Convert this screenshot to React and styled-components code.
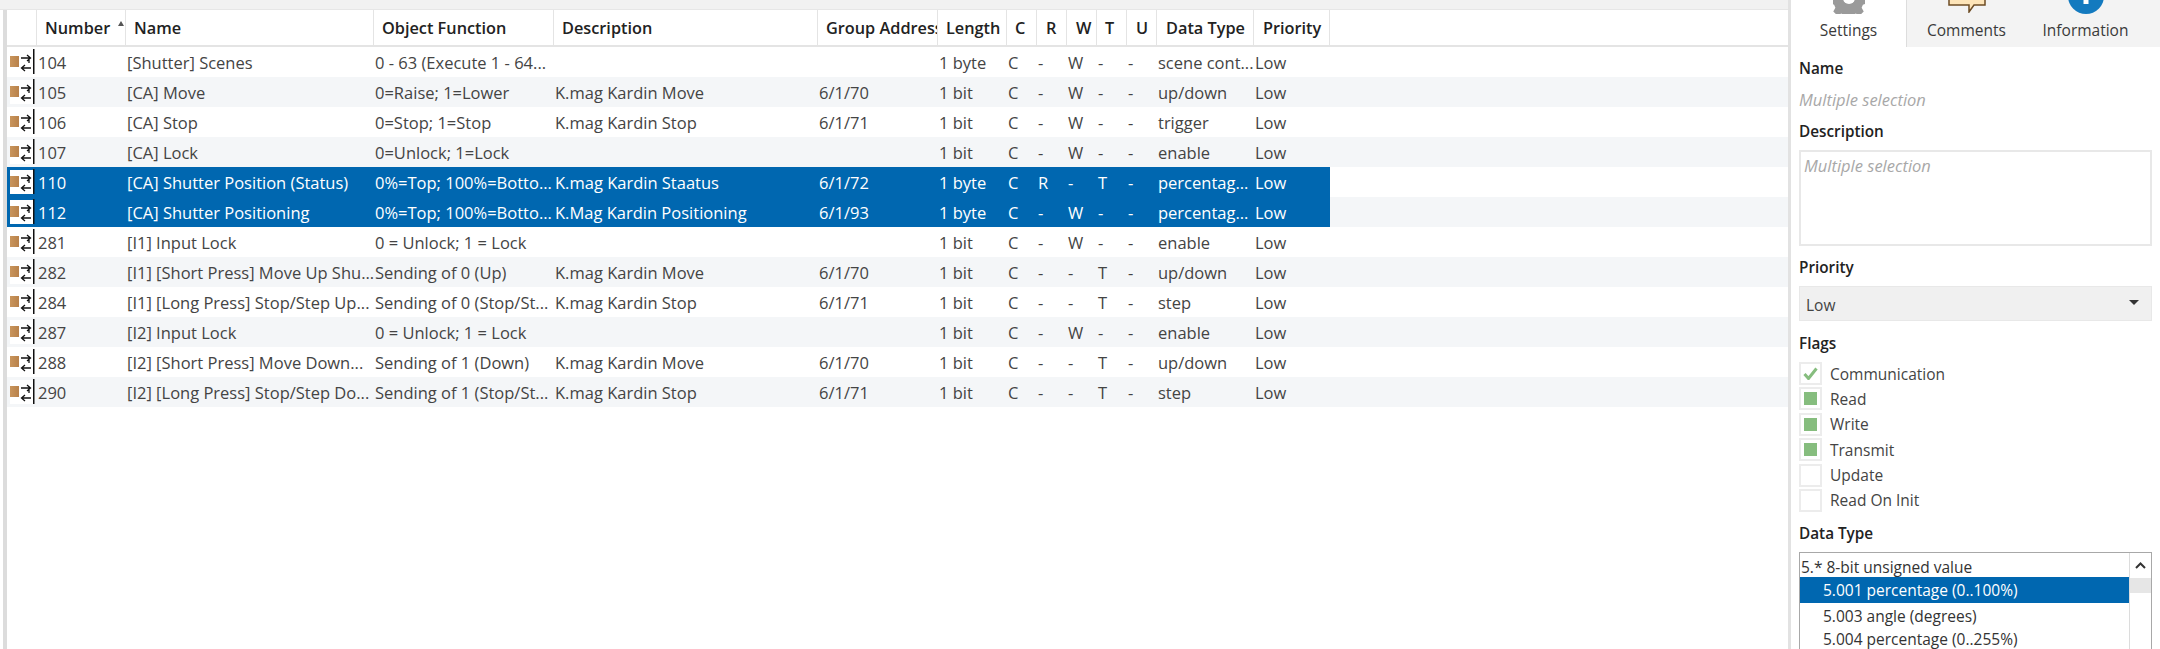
import React from 'react'
import styled, { createGlobalStyle } from 'styled-components'

const GlobalStyle = createGlobalStyle`
  html, body { margin: 0; padding: 0; background: #fff; overflow: hidden; }
  body { font-family: "Open Sans", "Noto Sans", "Liberation Sans", sans-serif; }
  #root { height: 649px; }
`

const columns = '30px 89px 248px 180px 264px 120px 69px 30px 30px 30px 30px 30px 97px 76px'
const tableWidth = '1323px'

const headers = [
  { label: '', pad: 0 },
  { label: 'Number', pad: 8, sorted: true },
  { label: 'Name', pad: 8 },
  { label: 'Object Function', pad: 8 },
  { label: 'Description', pad: 8 },
  { label: 'Group Address', pad: 8 },
  { label: 'Length', pad: 8 },
  { label: 'C', pad: 8 },
  { label: 'R', pad: 9 },
  { label: 'W', pad: 9 },
  { label: 'T', pad: 8 },
  { label: 'U', pad: 9 },
  { label: 'Data Type', pad: 9 },
  { label: 'Priority', pad: 9 },
]

const rows = [
  ['104', '[Shutter] Scenes', '0 - 63 (Execute 1 - 64...', '', '', '1 byte', 'C', '-', 'W', '-', '-', 'scene cont...', 'Low'],
  ['105', '[CA] Move', '0=Raise; 1=Lower', 'K.mag Kardin Move', '6/1/70', '1 bit', 'C', '-', 'W', '-', '-', 'up/down', 'Low'],
  ['106', '[CA] Stop', '0=Stop; 1=Stop', 'K.mag Kardin Stop', '6/1/71', '1 bit', 'C', '-', 'W', '-', '-', 'trigger', 'Low'],
  ['107', '[CA] Lock', '0=Unlock; 1=Lock', '', '', '1 bit', 'C', '-', 'W', '-', '-', 'enable', 'Low'],
  ['110', '[CA] Shutter Position (Status)', '0%=Top; 100%=Botto...', 'K.mag Kardin Staatus', '6/1/72', '1 byte', 'C', 'R', '-', 'T', '-', 'percentag...', 'Low'],
  ['112', '[CA] Shutter Positioning', '0%=Top; 100%=Botto...', 'K.Mag Kardin Positioning', '6/1/93', '1 byte', 'C', '-', 'W', '-', '-', 'percentag...', 'Low'],
  ['281', '[I1] Input Lock', '0 = Unlock; 1 = Lock', '', '', '1 bit', 'C', '-', 'W', '-', '-', 'enable', 'Low'],
  ['282', '[I1] [Short Press] Move Up Shu...', 'Sending of 0 (Up)', 'K.mag Kardin Move', '6/1/70', '1 bit', 'C', '-', '-', 'T', '-', 'up/down', 'Low'],
  ['284', '[I1] [Long Press] Stop/Step Up...', 'Sending of 0 (Stop/St...', 'K.mag Kardin Stop', '6/1/71', '1 bit', 'C', '-', '-', 'T', '-', 'step', 'Low'],
  ['287', '[I2] Input Lock', '0 = Unlock; 1 = Lock', '', '', '1 bit', 'C', '-', 'W', '-', '-', 'enable', 'Low'],
  ['288', '[I2] [Short Press] Move Down...', 'Sending of 1 (Down)', 'K.mag Kardin Move', '6/1/70', '1 bit', 'C', '-', '-', 'T', '-', 'up/down', 'Low'],
  ['290', '[I2] [Long Press] Stop/Step Do...', 'Sending of 1 (Stop/St...', 'K.mag Kardin Stop', '6/1/71', '1 bit', 'C', '-', '-', 'T', '-', 'step', 'Low'],
]

const selectedRows = ['110', '112']

const flags = [
  { label: 'Communication', mark: 'check' },
  { label: 'Read', mark: 'square' },
  { label: 'Write', mark: 'square' },
  { label: 'Transmit', mark: 'square' },
  { label: 'Update' },
  { label: 'Read On Init' },
]

const Page = styled.div`
  display: flex;
  width: 2160px;
  height: 649px;
  overflow: hidden;
  font-size: 15.5px;
  color: #444;
`

const Main = styled.div`
  flex: 0 0 1788px;
  display: flex;
  flex-direction: column;
  border-right: 3px solid #e2e2e2;
`

const TopStrip = styled.div`
  flex: 0 0 10px;
  background: #f1f1f1;
  border-bottom: 1px solid #e6e6e6;
  box-sizing: border-box;
`

const Content = styled.div`
  flex: 1;
  margin-left: 3px;
  border-left: 4px solid #dcdcdc;
`

const HeaderRow = styled.div`
  display: grid;
  grid-template-columns: ${columns};
  height: 37px;
  box-sizing: border-box;
  border-bottom: 2px solid #e4e4e4;
`

const HeaderCell = styled.div`
  position: relative;
  padding-left: ${p => p.$pad}px;
  padding-top: 2px;
  border-right: 1px solid #e4e4e4;
  overflow: hidden;
  white-space: nowrap;
  font-weight: 600;
  font-size: 16.3px;
  line-height: 32px;
  color: #222;
`

const SortMark = styled.span`
  position: absolute;
  right: 1px;
  top: 11px;
  width: 0;
  height: 0;
  border-left: 3px solid transparent;
  border-right: 3px solid transparent;
  border-bottom: 5px solid #555;
`

const RowLine = styled.div`
  height: 30px;
  background: ${p => (p.$alt ? '#f4f6f8' : '#fff')};
`

const RowCells = styled.div`
  display: grid;
  grid-template-columns: ${columns};
  width: ${tableWidth};
  height: 30px;
  line-height: 31px;
  font-size: 16.5px;
  background: ${p => (p.$selected ? '#0067b0' : 'transparent')};
  color: ${p => (p.$selected ? '#fff' : '#444')};
`

const Cell = styled.div`
  padding-left: 1px;
  white-space: nowrap;
  overflow: hidden;
`

const IconCell = styled.div`
  display: flex;
  padding-left: 3px;
`

const ObjectIcon = styled.svg`
  flex: none;
  display: block;
`

const Side = styled.aside`
  flex: 1;
  min-width: 0;
  display: flex;
  flex-direction: column;
`

const TabStrip = styled.div`
  flex: 0 0 47px;
  display: flex;
  background: #f3f3f3;
`

const Tab = styled.div`
  flex: 0 0 ${p => p.$width}px;
  height: 47px;
  overflow: hidden;
  display: flex;
  flex-direction: column;
  align-items: center;
  justify-content: flex-end;
  box-sizing: border-box;
  padding-bottom: 7px;
  background: ${p => (p.$active ? '#fff' : 'transparent')};
  border-right: ${p => (p.$active ? '1px solid #ddd' : 'none')};
  line-height: 20px;
  color: #3a3a3a;
`

const TabIcon = styled.svg`
  flex: none;
  display: block;
  margin-bottom: ${p => p.$gap || 6}px;
`

const Form = styled.div`
  flex: 1;
  padding: 10px 8px 0;
  overflow: hidden;
`

const Label = styled.div`
  font-weight: 600;
  font-size: 15.3px;
  line-height: 22px;
  color: #222;
  margin-top: ${p => p.$top || 0}px;
`

const Placeholder = styled.div`
  font-style: italic;
  font-size: 16.5px;
  line-height: 22px;
  color: #a8a8a8;
`

const NameValue = styled(Placeholder)`
  margin-top: 10px;
`

const DescriptionBox = styled.div`
  height: 96px;
  margin-top: 8px;
  padding: 3px 3px;
  box-sizing: border-box;
  border: 2px solid #e8e8e8;
`

const Select = styled.div`
  display: flex;
  align-items: center;
  justify-content: space-between;
  height: 35px;
  margin-top: 8px;
  padding: 2px 12px 0 6px;
  box-sizing: border-box;
  background: #f0f0f0;
  border: 1px solid #e8e8e8;
`

const Caret = styled.span`
  width: 0;
  height: 0;
  margin-top: -5px;
  border-left: 5px solid transparent;
  border-right: 5px solid transparent;
  border-top: 5px solid #333;
`

const FlagList = styled.div`
  display: flex;
  flex-direction: column;
  gap: 2.4px;
  margin-top: 8px;
`

const FlagRow = styled.div`
  display: flex;
  align-items: center;
  gap: 8px;
  height: 23px;
`

const FlagBox = styled.span`
  flex: none;
  width: 23px;
  height: 23px;
  box-sizing: border-box;
  border: 2px solid #ececec;
  display: flex;
  align-items: center;
  justify-content: center;
`

const FlagSquare = styled.span`
  width: 13px;
  height: 13px;
  background: #86bd7e;
`

const ListBox = styled.div`
  display: flex;
  height: 120px;
  margin-top: 8px;
  box-sizing: border-box;
  border: 1px solid #a8a8a8;
  border-bottom: none;
`

const ListItems = styled.div`
  flex: 1;
  min-width: 0;
`

const GroupItem = styled.div`
  height: 24px;
  line-height: 28px;
  padding-left: 1px;
  color: #333;
`

const ListItem = styled.div`
  height: ${p => (p.$selected ? '26px' : '23.5px')};
  line-height: 26px;
  padding-left: 23px;
  background: ${p => (p.$selected ? '#0067b0' : 'transparent')};
  color: ${p => (p.$selected ? '#fff' : '#333')};
`

const ScrollBar = styled.div`
  flex: 0 0 21px;
  display: flex;
  flex-direction: column;
  align-items: center;
  border-left: 1px solid #dcdcdc;
`

const ScrollArrow = styled.svg`
  display: block;
  margin: 9px 0 9px;
`

const ScrollThumb = styled.div`
  width: 100%;
  height: 15px;
  background: #e6e6e6;
`

const ConnectorIcon = () => (
  <ObjectIcon width="27" height="30" viewBox="0 0 27 30">
    <defs>
      <linearGradient id="brown" x1="0" x2="1" y1="0" y2="0">
        <stop offset="0" stopColor="#c9955c" />
        <stop offset="1" stopColor="#b8814a" />
      </linearGradient>
    </defs>
    <rect x="0" y="3" width="23" height="24" fill="#fff" />
    <rect x="0" y="9" width="9" height="11" fill="url(#brown)" />
    <path d="M11 11h9M17 8l3.500 3-3.500 3M19 11v5" fill="none" stroke="#111" strokeWidth="1.300" />
    <path d="M21 21h-9M15 18l-3.500 3 3.500 3" fill="none" stroke="#111" strokeWidth="1.300" />
    <rect x="23" y="2" width="1.500" height="25" fill="#111" />
  </ObjectIcon>
)

const GearIcon = () => (
  <TabIcon width="32" height="32" viewBox="0 0 32 32">
    <path
      d="M13 1h6l1 4 3 1.300 3.500-2 4 4.200-2 3.500 1.200 3 4 1v6l-4 1-1.200 3 2 3.500-4 4-3.500-2-3 1.200-1 4h-6l-1-4-3-1.200-3.500 2-4-4 2-3.500-1.200-3-4-1v-6l4-1 1.200-3-2-3.500 4-4.200 3.500 2 3-1.300z"
      transform="translate(-1.500 -1.500) scale(1.050) translate(0.200 0)"
      fill="#9a9a9a"
    />
    <circle cx="16" cy="16" r="6" fill="#fff" />
  </TabIcon>
)

const CommentIcon = () => (
  <TabIcon width="38" height="24" viewBox="0 0 38 24" $gap={7}>
    <path d="M1 -4h36v20H26l-5 7v-7H1z" fill="#fde4b8" stroke="#6d4c24" strokeWidth="1.500" />
  </TabIcon>
)

const InfoIcon = () => (
  <TabIcon width="36" height="36" viewBox="0 0 36 36">
    <circle cx="18" cy="18" r="18" fill="#137abf" />
    <rect x="15.500" y="13" width="5" height="13" fill="#fff" />
  </TabIcon>
)

const App = () => {
  return (
    <>
      <GlobalStyle />
      <Page>
        <Main>
          <TopStrip />
          <Content>
            <HeaderRow>
              {headers.map(({ label, pad, sorted }, i) => (
                <HeaderCell key={i} $pad={pad}>
                  {label}
                  {sorted && <SortMark />}
                </HeaderCell>
              ))}
            </HeaderRow>
            {rows.map((row, i) => (
              <RowLine key={row[0]} $alt={i % 2 === 1}>
                <RowCells $selected={selectedRows.includes(row[0])}>
                  <IconCell>
                    <ConnectorIcon />
                  </IconCell>
                  {row.map((value, j) => (
                    <Cell key={j}>{value}</Cell>
                  ))}
                </RowCells>
              </RowLine>
            ))}
          </Content>
        </Main>
        <Side>
          <TabStrip>
            <Tab $width={116} $active>
              <GearIcon />
              Settings
            </Tab>
            <Tab $width={119}>
              <CommentIcon />
              Comments
            </Tab>
            <Tab $width={119}>
              <InfoIcon />
              Information
            </Tab>
          </TabStrip>
          <Form>
            <Label>Name</Label>
            <NameValue>Multiple selection</NameValue>
            <Label $top={9}>Description</Label>
            <DescriptionBox>
              <Placeholder>Multiple selection</Placeholder>
            </DescriptionBox>
            <Label $top={10}>Priority</Label>
            <Select>
              Low
              <Caret />
            </Select>
            <Label $top={11}>Flags</Label>
            <FlagList>
              {flags.map(({ label, mark }) => (
                <FlagRow key={label}>
                  <FlagBox>
                    {mark === 'check' && (
                      <svg width="15" height="13" viewBox="0 0 15 13">
                        <path d="M1.500 7l4 4.500L13.500 1.500" fill="none" stroke="#86bd7e" strokeWidth="3" />
                      </svg>
                    )}
                    {mark === 'square' && <FlagSquare />}
                  </FlagBox>
                  {label}
                </FlagRow>
              ))}
            </FlagList>
            <Label $top={10}>Data Type</Label>
            <ListBox>
              <ListItems>
                <GroupItem>5.* 8-bit unsigned value</GroupItem>
                <ListItem $selected>5.001 percentage (0..100%)</ListItem>
                <ListItem>5.003 angle (degrees)</ListItem>
                <ListItem>5.004 percentage (0..255%)</ListItem>
              </ListItems>
              <ScrollBar>
                <ScrollArrow width="11" height="7" viewBox="0 0 11 7">
                  <path d="M1 6l4.500-4.500L10 6" fill="none" stroke="#333" strokeWidth="2" />
                </ScrollArrow>
                <ScrollThumb />
              </ScrollBar>
            </ListBox>
          </Form>
        </Side>
      </Page>
    </>
  )
}

export default App
